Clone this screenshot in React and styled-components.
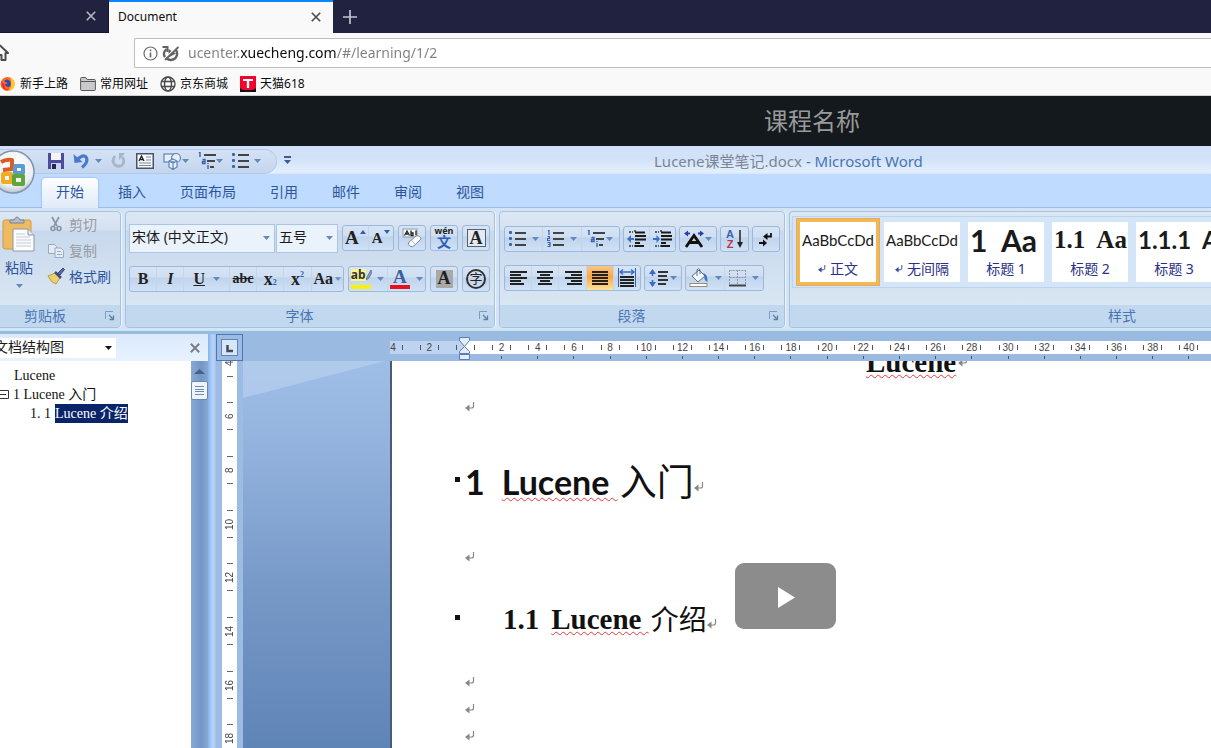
import React from "react";
import styled, { createGlobalStyle, css } from "styled-components";

const GlobalStyle = createGlobalStyle`
  *, *::before, *::after { box-sizing: border-box; }
  html, body { margin: 0; height: 100%; }
  body { overflow: hidden; background: #fff; }
  #root { height: 100%; }
  button, select, input { font: inherit; color: inherit; margin: 0; padding: 0; border: 0; background: none; }
  button { cursor: pointer; }
  h1, h2, p, ul { margin: 0; padding: 0; font-weight: inherit; }
  svg { display: block; flex: none; }
`;

const ui = `"Noto Sans", "Noto Sans CJK SC", sans-serif`;
const serif = `"Liberation Serif", "Noto Sans CJK SC", serif`;

const Screen = styled.div`
  display: flex;
  flex-direction: column;
  height: 100vh;
  overflow: hidden;
  font-family: ${ui};
`;

/* ---------- browser chrome ---------- */

const TabStrip = styled.div`
  display: flex;
  flex: none;
  height: 33px;
  background: #20223f;
`;

const BrowserTab = styled.div`
  display: flex;
  align-items: center;
  justify-content: space-between;
  flex: none;
  width: ${(p) => (p.$active ? 224 : 109)}px;
  padding: 0 11px 2px 9px;
  font-size: 12px;
  color: #0c0c0d;
  ${(p) =>
    p.$active
      ? css`
          background: #f9f9fa;
          border-top: 2px solid #0a84ff;
        `
      : css`
          padding-top: 2px;
          border-right: 1px solid #14162c;
          border-bottom: 1px solid #14162c;
        `}
`;

const ChromeButton = styled.button`
  display: flex;
  align-items: center;
  justify-content: center;
  width: ${(p) => p.$w || 12}px;
`;

const NavBar = styled.div`
  display: flex;
  align-items: center;
  flex: none;
  height: 39px;
  padding-top: 1px;
  background: #f9f9fa;
`;

const HomeButton = styled.button`
  width: 134px;
  margin-left: -9px;
  margin-right: 9px;
  flex: none;
`;

const AddressBox = styled.label`
  display: flex;
  align-items: center;
  flex: 1;
  gap: 4px;
  height: 30px;
  padding-left: 8px;
  background: #fff;
  border: 1px solid #bdbdbf;
  border-right: 0;
  border-radius: 2px 0 0 2px;
`;

const AddressInput = styled.input`
  flex: 1;
  min-width: 0;
  height: 28px;
  margin-left: 5px;
  padding-bottom: 2px;
  font-family: "Noto Sans", sans-serif;
  font-size: 14px;
  color: transparent;
  background: linear-gradient(to right, #7f7f80 53px, #0c0c0d 53px, #0c0c0d 149px, #7f7f80 149px);
  -webkit-background-clip: text;
  background-clip: text;
  outline: none;
`;

const BookmarkBar = styled.nav`
  display: flex;
  align-items: center;
  gap: 12px;
  flex: none;
  height: 24px;
  background: #f9f9fa;
  border-bottom: 1px solid #d0d0d2;
`;

const Bookmark = styled.a`
  display: flex;
  align-items: center;
  gap: 4px;
  font-size: 12px;
  line-height: 16px;
  white-space: nowrap;
  color: #0c0c0d;
  text-decoration: none;
`;

const CourseHeader = styled.header`
  flex: none;
  height: 50px;
  padding-left: 764px;
  background: #14191d;
  color: #999;
  font-size: 24px;
  line-height: 50px;
  white-space: nowrap;
`;

/* ---------- word window ---------- */

const Word = styled.main`
  position: relative;
  display: flex;
  flex-direction: column;
  flex: 1;
  min-height: 0;
  overflow: hidden;
  background: #9bbae2;
  color: #2c559b;
  font-size: 14px;
`;

const TitleBar = styled.div`
  display: flex;
  align-items: center;
  flex: none;
  height: 28px;
  padding-top: 3px;
  background: linear-gradient(#cfdffb 0, #d3e2f8 6px, #d0e1f8 12px, #e4effd 26px, #d5e5fb 28px);
`;

const QuickAccess = styled.div`
  display: flex;
  align-items: center;
  gap: 9px;
  height: 25px;
  padding: 0 15px 2px 48px;
  background: linear-gradient(#d5e2f4, #c3d6ee);
  border: 1px solid #b4cae6;
  border-left: 0;
  border-radius: 0 13px 13px 0;
`;

const QuickButton = styled.button`
  display: flex;
  align-items: center;
  justify-content: space-between;
  width: ${(p) => p.$w}px;
`;

const OverflowButton = styled.button`
  margin-left: 7px;
  padding-bottom: 4px;
`;

const WindowTitle = styled.div`
  margin-left: 363px;
  padding-bottom: 2px;
  white-space: nowrap;
  font-size: 15px;
  color: #4a75b3;
`;

const FileName = styled.span`
  color: #7c8593;
`;

const OfficeButton = styled.button`
  position: absolute;
  left: -9px;
  top: 4px;
`;

const RibbonTabs = styled.div`
  display: flex;
  align-items: stretch;
  flex: none;
  height: 34px;
  padding: 4px 0 0 39px;
  background: #bfdbff;
  border-bottom: 1px solid #9dbde6;
`;

const RibbonTab = styled.button`
  flex: none;
  margin: 0 3px -1px;
  padding: 0 14px 2px;
  line-height: 28px;
  white-space: nowrap;
  ${(p) =>
    p.$active &&
    css`
      background: linear-gradient(#fdfeff, #dfeaf8);
      border-radius: 4px 4px 0 0;
      box-shadow: 0 0 2px #6f9bd2;
    `}
`;

const Ribbon = styled.div`
  display: flex;
  gap: 4px;
  flex: none;
  height: 123px;
  padding: 3px 0 2px;
  background: #d5e4f5;
  border-bottom: 1px solid #b9eef0;
  overflow: hidden;
`;

const Group = styled.section`
  display: flex;
  flex-direction: column;
  flex: ${(p) => (p.$w ? "none" : "1")};
  width: ${(p) => (p.$w ? `${p.$w}px` : "auto")};
  margin-left: ${(p) => (p.$cut ? -10 : 0)}px;
  min-width: 0;
  border: 1px solid #a6c2e2;
  border-right-width: ${(p) => (p.$w ? 1 : 0)}px;
  border-radius: ${(p) => (p.$w ? "4px" : "4px 0 0 4px")};
  box-shadow: 1px 0 0 #eef5fd;
  background: linear-gradient(#dde7f4 0, #d5e1f0 18px, #c8d9ed 19px, #d9e6f3 95px);
  overflow: hidden;
`;

const GroupBody = styled.div`
  display: flex;
  flex-direction: ${(p) => (p.$row ? "row" : "column")};
  flex: 1;
  gap: ${(p) => p.$gap || 0}px;
  padding: ${(p) => p.$pad};
  min-width: 0;
`;

const GroupFooter = styled.div`
  display: flex;
  align-items: center;
  flex: none;
  height: 22px;
  padding-right: 5px;
  background: #c1d8ef;
  color: #4a75b3;
`;

const GroupLabel = styled.span`
  flex: 1;
  padding-left: ${(p) => p.$shift || 0}px;
  padding-right: ${(p) => (p.$shift ? 0 : 6)}px;
  text-align: center;
  line-height: 20px;
`;

const PasteButton = styled.button`
  display: flex;
  flex-direction: column;
  align-items: center;
  gap: 6px;
  width: 40px;
  line-height: 20px;
`;

const ClipList = styled.div`
  display: flex;
  flex-direction: column;
  gap: 2px;
  margin-top: -4px;
`;

const ClipButton = styled.button`
  display: flex;
  align-items: center;
  gap: 4px;
  height: 24px;
  color: ${(p) => (p.disabled ? "#979ba3" : "#2c559b")};
`;

const ClipIcon = styled.span`
  display: flex;
  justify-content: center;
  width: 18px;
`;

const ToolRow = styled.div`
  display: flex;
  align-items: center;
  gap: ${(p) => p.$gap}px;
  height: 28px;
`;

const Combos = styled.div`
  display: flex;
  gap: 1px;
  height: 29px;
`;

const ComboBox = styled.label`
  display: flex;
  align-items: center;
  width: ${(p) => p.$w}px;
  padding-right: 4px;
  background: #eaf2fb;
  border: 1px solid #abc5e5;
`;

const Select = styled.select`
  appearance: none;
  flex: 1;
  min-width: 0;
  padding-left: 2px;
  padding-bottom: 2px;
  color: #1b1b1b;
  outline: none;
  line-height: 20px;
`;

const Cluster = styled.div`
  display: flex;
  flex: none;
  width: ${(p) => p.$w}px;
  height: 26px;
  border: 1px solid #9db8dd;
  border-radius: 3px;
  background: linear-gradient(#d6e4f5 0, #cfdef1 10px, #bfd3ec 11px, #d0e2f6 24px);
  overflow: hidden;
`;

const Tool = styled.button`
  display: flex;
  align-items: center;
  justify-content: center;
  gap: ${(p) => p.$gap || 0}px;
  flex: ${(p) => p.$grow || 1};
  min-width: 0;
  border-left: 1px solid #c4d6ec;
  color: #222;
  white-space: nowrap;
  &:first-child { border-left: 0; }
  ${(p) =>
    p.$on &&
    css`
      background: linear-gradient(#f8c58a, #fba63f 45%, #fde49a);
    `}
`;

const Glyph = styled.span`
  font-family: "Liberation Serif", serif;
  font-size: ${(p) => p.$size || 18}px;
  line-height: 20px;
  font-weight: 700;
  font-style: ${(p) => (p.$italic ? "italic" : "normal")};
  text-decoration: ${(p) => p.$line || "none"};
  color: ${(p) => p.$color || "#222"};
`;

const Script = styled.sup`
  align-self: ${(p) => (p.$low ? "flex-end" : "flex-start")};
  padding: 4px 0;
  font: 700 8px/8px "Liberation Serif", serif;
  color: #2f5fb5;
`;

const SizeArrow = styled.svg`
  align-self: flex-start;
  margin-top: 4px;
`;

const Framed = styled.span`
  width: ${(p) => (p.$fill ? 17 : 19)}px;
  height: 18px;
  text-align: center;
  font: 700 18px/17px "Liberation Serif", serif;
  color: #222;
  background: ${(p) => (p.$fill ? "#a9a9a9" : "#e3eaf4")};
  border: ${(p) => (p.$fill ? "0" : "1px solid #5a6069")};
`;

const Circled = styled.span`
  width: 20px;
  height: 20px;
  border: 2px solid #333;
  border-radius: 50%;
  text-align: center;
  font-size: 13px;
  line-height: 15px;
`;

const Pinyin = styled.span`
  display: flex;
  flex-direction: column;
  align-items: center;
  font-weight: 700;
`;
const PinyinTop = styled.span`
  font-size: 9px;
  line-height: 8px;
`;
const PinyinBase = styled.span`
  font-size: 14px;
  line-height: 14px;
  color: #2f5fb5;
`;

const ColorTool = styled.span`
  display: flex;
  align-items: flex-start;
  justify-content: center;
  width: 20px;
  height: 20px;
  border-bottom: 4px solid ${(p) => p.$bar};
`;

const Letter = styled.span`
  font-family: ${(p) => (p.$sans ? ui : `"Liberation Serif", serif`)};
  font-size: ${(p) => (p.$sans ? 12 : 19)}px;
  line-height: ${(p) => (p.$sans ? 12 : 16)}px;
  font-weight: 700;
  color: ${(p) => p.$color || "#333"};
  background: ${(p) => p.$bg || "none"};
`;

const SortLetters = styled.span`
  display: flex;
  flex-direction: column;
  font: 700 11px/10px "Liberation Sans", sans-serif;
  color: #3763b4;
`;
const SortZ = styled.span`
  color: #b23a4b;
`;

const Gallery = styled.div`
  display: flex;
  gap: 8px;
  flex: 1;
  height: 72px;
  padding: 5px 0 5px 7px;
  background: #d5e5f8;
  border: 1px solid #bdd2ec;
  border-right: 0;
  overflow: hidden;
`;

const StyleCard = styled.button`
  display: flex;
  flex-direction: column;
  align-items: center;
  justify-content: space-between;
  flex: none;
  width: 76px;
  padding: 0 2px 3px;
  background: #fff;
  overflow: hidden;
  ${(p) =>
    p.$on &&
    css`
      outline: 3px solid #f3b850;
      box-shadow: 0 0 0 4px #dfab66;
    `}
`;

const Sample = styled.span`
  height: 36px;
  line-height: 36px;
  white-space: pre;
  color: #1a1a1a;
  align-self: ${(p) => (p.$bold ? "flex-start" : "center")};
  font-family: ${(p) => p.$font};
  font-size: ${(p) => p.$size}px;
  font-weight: ${(p) => (p.$bold ? 700 : 400)};
`;

const StyleName = styled.span`
  display: flex;
  align-items: center;
  gap: 4px;
  line-height: 20px;
  color: #2c2f86;
`;

/* ---------- work area ---------- */

const WorkArea = styled.div`
  display: flex;
  flex: 1;
  min-height: 0;
  padding-top: 3px;
`;

const MapPane = styled.aside`
  display: flex;
  flex-direction: column;
  flex: none;
  width: 208px;
  background: #fff;
  color: #111;
`;

const PaneHead = styled.div`
  display: flex;
  align-items: center;
  justify-content: space-between;
  flex: none;
  height: 27px;
  padding-right: 7px;
  background: linear-gradient(#dbe9fc, #e8f2ff);
`;

const PaneSelect = styled.label`
  display: flex;
  align-items: center;
  width: 124px;
  height: 20px;
  margin-left: -8px;
  padding-right: 4px;
  background: #fff;
`;

const PaneBody = styled.div`
  display: flex;
  flex: 1;
  min-height: 0;
`;

const Tree = styled.ul`
  flex: 1;
  padding-top: 5px;
  list-style: none;
  font-family: ${serif};
  font-size: 14px;
  line-height: 19px;
`;

const TreeItem = styled.li`
  display: flex;
  align-items: center;
  gap: 4px;
  height: 19px;
  padding-left: ${(p) => p.$indent}px;
  white-space: pre;
`;

const Chosen = styled.span`
  background: #0a246a;
  color: #fff;
`;

const ScrollTrack = styled.div`
  display: flex;
  flex-direction: column;
  align-items: center;
  gap: 7px;
  flex: none;
  width: 17px;
  padding-top: 8px;
  background: linear-gradient(to right, #88a9d4, #7297c6 60%, #86a8d4);
`;

const ScrollThumb = styled.div`
  display: flex;
  flex-direction: column;
  justify-content: space-evenly;
  align-self: stretch;
  height: 19px;
  padding: 2px 3px;
  background: #eef4fb;
  border: 1px solid #6d88ad;
  border-radius: 2px;
`;
const Grip = styled.span`
  height: 1px;
  background: #7389a8;
`;

const Splitter = styled.div`
  flex: none;
  width: 8px;
  background: linear-gradient(to right, #86b2ee, #b9d4fa 60%, #a6c1e4);
`;

const RulerColumn = styled.div`
  display: flex;
  flex-direction: column;
  flex: none;
  width: 27px;
  background: #9dbce4;
`;

const TabCorner = styled.button`
  display: flex;
  align-items: center;
  justify-content: center;
  flex: none;
  height: 27px;
  border: 1px solid #4d76b8;
`;

const VerticalRuler = styled.div`
  display: flex;
  flex: 1;
  min-height: 0;
  width: 15px;
  margin-left: 6px;
  background: #fff;
  overflow: hidden;
`;

const VerticalMarks = styled.div`
  display: grid;
  grid-template-rows: repeat(8, 1fr);
  flex: 1;
  margin: -25px 0 -17px;
`;

const VerticalMark = styled.div`
  display: flex;
  flex-direction: column;
  align-items: center;
  justify-content: center;
  font: 10px/13px "Liberation Sans", sans-serif;
  color: #444;
`;
const Turned = styled.span`
  display: flex;
  align-items: center;
  justify-content: center;
  height: 26px;
  writing-mode: vertical-rl;
  transform: rotate(180deg);
`;
const Dash = styled.span`
  width: 6px;
  height: 1px;
  background: #666;
`;

const Canvas = styled.div`
  display: flex;
  flex-direction: column;
  flex: 1;
  min-width: 0;
`;

const RulerRow = styled.div`
  position: relative;
  flex: none;
  height: 27px;
  padding: 7px 0 0 147px;
  background: #9bbae2;
`;

const RulerBand = styled.div`
  height: 13px;
  background: linear-gradient(to right, #bdd3f1 75px, #fff 75px);
  overflow: hidden;
`;

const Marks = styled.div`
  display: grid;
  grid-template-columns: repeat(23, 1fr);
  margin: 0 4px 0 -15px;
`;

const Mark = styled.div`
  display: flex;
  align-items: center;
  justify-content: center;
  height: 13px;
  font: 10px/13px "Liberation Sans", sans-serif;
  color: #444;
`;
const MarkNumber = styled.span`
  width: 17px;
  text-align: center;
`;
const Pin = styled.span`
  width: 1px;
  height: 5px;
  background: #555;
`;
const TickCell = styled.div`
  display: flex;
  justify-content: center;
  height: 5px;
  padding-top: 2px;
`;
const TickRow = styled.div`
  overflow: hidden;
`;
const IndentMarker = styled.svg`
  position: absolute;
  left: 215px;
  top: 3px;
`;

const Sheet = styled.div`
  display: flex;
  flex: 1;
  min-height: 0;
`;

const Desk = styled.div`
  flex: none;
  width: 147px;
  background: linear-gradient(#9fbee7, #92b1dc 24%, #7698c7 60%, #5f84b6);
`;

const Page = styled.article`
  flex: 1;
  min-width: 0;
  padding-left: 63px;
  background: #fff;
  border-left: 2px solid #4b5b73;
  color: #111;
  overflow: hidden;
`;

const PageTitle = styled.h1`
  display: flex;
  align-items: center;
  gap: 2px;
  height: 48px;
  margin: -16px 0 0 411px;
  padding-bottom: 14px;
  font: 700 29px/34px ${serif};
`;

const EmptyLine = styled.p`
  display: flex;
  align-items: center;
  height: 27px;
  padding-left: 10px;
`;

const Heading = styled.h2`
  display: flex;
  align-items: center;
  gap: ${(p) => p.$gap}px;
  height: ${(p) => p.$h}px;
  font-family: ${(p) => p.$font};
  font-size: ${(p) => p.$size}px;
  font-weight: 700;
  white-space: pre;
`;

const Bullet = styled.span`
  width: 5px;
  height: 5px;
  margin-right: ${(p) => p.$mr}px;
  margin-bottom: 4px;
  background: #111;
`;

const HeadNumber = styled.span`
  margin-right: ${(p) => p.$mr}px;
`;

const Spelled = styled.span`
  text-decoration: underline wavy #e8383c 1px;
  text-decoration-skip-ink: none;
  text-underline-offset: 2px;
`;

const Han = styled.span`
  margin-left: ${(p) => p.$ml || 0}px;
  font-family: "Noto Sans CJK SC", sans-serif;
  font-size: ${(p) => p.$size}px;
  line-height: 40px;
  padding-bottom: 3px;
  font-weight: 400;
`;

const EndMark = styled.span`
  padding-top: 10px;
`;

const PlayButton = styled.button`
  position: absolute;
  left: 735px;
  top: 417px;
  display: flex;
  align-items: center;
  justify-content: center;
  width: 101px;
  height: 66px;
  padding: 2px 0 0 2px;
  border-radius: 9px;
  background: #8c8c8c;
`;

/* ---------- drawings ---------- */

const Caret = ({ c = "#6389bd", w = 7 }) => (
  <svg width={w} height="4" viewBox="0 0 7 4"><path d="M0 0h7L3.500 4z" fill={c} /></svg>
);

const Cross = ({ c, size = 10, w = 1.6 }) => (
  <svg width={size} height={size} viewBox="0 0 10 10"><path d="M.8.8l8.400 8.400M9.200.8L.8 9.200" stroke={c} strokeWidth={w} fill="none" /></svg>
);

const Return = ({ c = "#888", w = 10 }) => (
  <svg width={w} height={w} viewBox="0 0 10 10">
    <path d="M8.500 0v4q0 2-2 2H3" stroke={c} strokeWidth="1.200" fill="none" />
    <path d="M0 6L4.500 2.500v7z" fill={c} />
  </svg>
);

const Launcher = () => (
  <svg width="10" height="10" viewBox="0 0 10 10" fill="none" stroke="#7c9cc6">
    <path d="M.5 8V.5H8" /><path d="M4 4l4 4M8.500 4.500v4h-4" stroke="#64829f" strokeWidth="1.300" />
  </svg>
);

const Bars = ({ rows, w = 18 }) => (
  <svg width={w} height="16" viewBox={`0 0 ${w} 16`}>
    {rows.map(([x, len], i) => <rect key={i} x={x} y={1 + i * 3} width={len} height="2" fill="#222" />)}
  </svg>
);

const BulletList = ({ w = 17 }) => (
  <svg width={w} height="16" viewBox="0 0 17 16">
    {[1, 7, 13].map((y) => <g key={y}><rect x="0" y={y - 1} width="3" height="3" rx="1" fill="#3b62b0" /><rect x="6" y={y} width="11" height="2" fill="#444" /></g>)}
  </svg>
);

const NumberList = () => (
  <svg width="17" height="18" viewBox="0 0 17 18">
    {[2, 8, 14].map((y) => <rect key={y} x="6" y={y} width="11" height="2" fill="#444" />)}
    <path d="M1 1l1-1v5M.5 6.500h2v2h-2v2h2.500M.5 12.500h2.500v4h-2.500M1 14.500h2" stroke="#3b62b0" strokeWidth="1.200" fill="none" />
  </svg>
);

const MultiList = ({ w = 18 }) => (
  <svg width={w} height="18" viewBox="0 0 18 18">
    <path d="M1 1l1-1v5M4.500 7.500h2.500v4h-2.500v-2h2M10 13v4M10 11v1" stroke="#3b62b0" strokeWidth="1.400" fill="none" />
    <path d="M6 3h12M9 9h8M12 15h4" stroke="#444" strokeWidth="2" />
  </svg>
);

const Indent = ({ out }) => (
  <svg width="19" height="18" viewBox="0 0 19 18">
    <path d="M2 2h4M2 16h4M8 0v3M8 15v3" stroke="#333" strokeWidth="1.500" strokeDasharray="2 1" />
    <path d="M8 2.500h10M8 6h11M8 9.500h11M8 13h5M8 16h9" stroke="#1a1a1a" strokeWidth="2" />
    <path d={out ? "M0 9l4-4v3h3v2H4v3z" : "M7 9L3.500 5v3H0v2h3.500v3z"} fill="#3d6fc4" />
  </svg>
);

const AsianLayout = () => (
  <svg width="20" height="18" viewBox="0 0 20 18">
    <path d="M2 17L10 5.500 18 17M5.500 12.500h9" stroke="#111" strokeWidth="2.800" fill="none" />
    <path d="M0 3.500l4-3v6zM4 2.500h2v2H4zM20 3.500l-4-3v6zM14 2.500h2v2h-2z" fill="#2b3fae" />
  </svg>
);

const Distribute = () => (
  <svg width="18" height="20" viewBox="0 0 18 20">
    <path d="M.5 0v19M17.500 0v19" stroke="#3a5fa8" />
    <path d="M2 4h14M5 1.500L2 4l3 2.500M13 1.500L16 4l-3 2.500" stroke="#3a6cc6" strokeWidth="1.400" fill="none" />
    <path d="M2 9h14M2 12h14M2 15h14M2 18h14" stroke="#222" strokeWidth="2" />
  </svg>
);

const LineSpacing = () => (
  <svg width="19" height="18" viewBox="0 0 19 18">
    <path d="M3.500 1v6M3.500 11v6" stroke="#3a6cc6" strokeWidth="1.600" />
    <path d="M0 5l3.500-5L7 5zM0 13l3.500 5L7 13z" fill="#3a6cc6" />
    <path d="M9 3h10M9 7h9M9 11h10M9 15h8" stroke="#333" strokeWidth="1.800" />
  </svg>
);

const Bucket = () => (
  <svg width="20" height="20" viewBox="0 0 20 20">
    <path d="M3 8l7-6 6 6-7 6z" fill="#f4f7fb" stroke="#566f93" /><path d="M8 8V2q1.500-3 3 0v4" fill="none" stroke="#566f93" />
    <path d="M14 5q5 1 4.500 9-4-2-3-6" fill="#4375bd" /><rect x="1" y="15.500" width="17" height="3" fill="#fff" stroke="#9a8b74" />
  </svg>
);

const Borders = () => (
  <svg width="17" height="18" viewBox="0 0 17 18" fill="none" stroke="#8c96a5">
    <path d="M.5 1.500h16M.5 8.500h16M.5 1v15M8.500 1v15M16.500 1v15" strokeDasharray="2 1" /><path d="M0 16.500h17" stroke="#444" strokeWidth="2" />
  </svg>
);

const Eraser = () => (
  <svg width="20" height="20" viewBox="0 0 20 20">
    <rect x="1" y="1" width="14" height="8" fill="#f5f7fa" stroke="#8d9bb0" />
    <path d="M2.500 7.500L5 3l2.500 4.500M4 6h2M9 2.500v5h2V5H9M14 2.500v5" stroke="#222" strokeWidth="1.300" fill="none" />
    <path d="M7 14l7-6q4-1 5 3l-6 6q-3 3-5 1-3-1-1-4z" fill="#fff" stroke="#7c8aa3" /><path d="M9 12l4 4" stroke="#a3b0c4" />
  </svg>
);

const Undo = ({ c }) => (
  <svg width="16" height="16" viewBox="0 0 16 16">
    <path d="M5 6q5-5 8-2 3 5-4 10.500" fill="none" stroke={c} strokeWidth="3.200" /><path d="M.5 1l1 9 8-1z" fill={c} />
  </svg>
);

const Redo = () => (
  <svg width="16" height="16" viewBox="0 0 16 16">
    <path d="M4 3Q0 8 4 12q5 3 8-1 2-4-1-7" fill="none" stroke="#a9b5c8" strokeWidth="2.800" /><path d="M8 7V0h6z" fill="#a9b5c8" />
  </svg>
);

const Disk = () => (
  <svg width="16" height="16" viewBox="0 0 16 16">
    <path d="M0 0h16v16H0z" fill="#4b4a9c" /><rect x="3" y="0" width="10" height="7" fill="#f3f5fb" /><rect x="3" y="10" width="10" height="6" fill="#c9d4ea" /><rect x="4" y="11" width="4" height="5" fill="#23265c" />
  </svg>
);

const TextBoxIcon = () => (
  <svg width="18" height="16" viewBox="0 0 18 16">
    <rect x=".75" y=".75" width="16.500" height="14.500" fill="#f8fafd" stroke="#46546b" strokeWidth="1.500" />
    <path d="M3 8l2.500-5L8 8M4 6.500h3" stroke="#222" strokeWidth="1.300" fill="none" /><path d="M10 4h5M10 7h5M3 10h12M3 12.500h12" stroke="#7e8ba0" />
  </svg>
);

const Shapes = () => (
  <svg width="18" height="18" viewBox="0 0 18 18" fill="#e6effb" stroke="#5f83b8" strokeWidth="1.200">
    <rect x="1" y="2" width="10" height="8" /><circle cx="13" cy="6" r="4.500" /><path d="M6 9l4-2 4 2v6l-4 2.500-4-2.500zM6 9l4 2 4-2M10 11v6" />
  </svg>
);

const OfficeLogo = () => (
  <svg width="44" height="44" viewBox="0 0 44 44">
    <defs>
      <radialGradient id="orb" cx=".5" cy=".35" r=".7"><stop offset="0" stopColor="#fff" /><stop offset=".7" stopColor="#eceff4" /><stop offset="1" stopColor="#a5b2c4" /></radialGradient>
    </defs>
    <circle cx="22" cy="22" r="21" fill="url(#orb)" stroke="#8395ae" strokeWidth="1.500" />
    <g fill="none" strokeWidth="4" strokeLinejoin="round">
      <path d="M10 12q5-3 11-2v9l-9 1" stroke="#dd5a20" /><path d="M24 16h8v7h-8z" stroke="#5b9bd5" />
      <path d="M12 24h8v8h-8z" stroke="#f0ad22" /><path d="M23 26h9v8h-9z" stroke="#5fa53a" />
    </g>
  </svg>
);

const PasteIcon = () => (
  <svg width="34" height="36" viewBox="0 0 34 36">
    <rect x="1" y="4" width="28" height="29" rx="2" fill="#eebb60" stroke="#cf9a45" />
    <path d="M8 7V4h4q3-6 6 0h4v3z" fill="#b3bcc8" stroke="#768496" />
    <path d="M11 13h15l6 6v16H11z" fill="#fbfcfe" stroke="#8c97a7" /><path d="M26 13v6h6" fill="#dfe6ef" stroke="#8c97a7" />
    <path d="M14 18h9M14 21h14M14 24h15M14 27h15M14 30h15" stroke="#c5ccd7" />
  </svg>
);

const Scissors = () => (
  <svg width="16" height="16" viewBox="0 0 16 16" fill="none" stroke="#8494ab" strokeWidth="1.600">
    <path d="M4 1l5 9M11 1L6 10" /><circle cx="5" cy="12.500" r="2" /><circle cx="11" cy="12.500" r="2" />
  </svg>
);

const CopyIcon = () => (
  <svg width="16" height="16" viewBox="0 0 16 16" fill="#e4ebf5" stroke="#9aaac1">
    <path d="M.5 2.500h6l2 2v7h-8z" /><path d="M7 6h6l2.500 2.500v7H7z" /><path d="M9 9.500h4M9 12.500h5" />
  </svg>
);

const Brush = () => (
  <svg width="18" height="18" viewBox="0 0 18 18">
    <path d="M11 6l5-5 1.500 1.500-4.500 5.500z" fill="#5c6fa8" stroke="#35457c" /><path d="M1 9l7-3 5 5-4 6q-5-1-8-8z" fill="#edd06e" stroke="#b89c48" /><path d="M8 5l6 6" stroke="#3f4d84" strokeWidth="2.500" />
  </svg>
);

const Home = () => (
  <svg width="18" height="18" viewBox="0 0 18 18">
    <path d="M1 9l8-7.500L17 9h-2.500v7h-4v-5h-3v5h-4V9z" fill="none" stroke="#4a4a4c" strokeWidth="2" strokeLinejoin="round" /><rect x="7" y="11" width="2" height="5" fill="#4a4a4c" />
  </svg>
);

const Info = () => (
  <svg width="15" height="15" viewBox="0 0 15 15">
    <circle cx="7.500" cy="7.500" r="6.500" fill="none" stroke="#6b6b6d" strokeWidth="1.200" /><path d="M7.500 6.500v5M7.500 3.500v1.700" stroke="#6b6b6d" strokeWidth="1.600" />
  </svg>
);

const Blocked = () => (
  <svg width="17" height="17" viewBox="0 0 17 17" fill="none" stroke="#626264">
    <path d="M4.500 4Q-.5 9 4 13q5 4 9.500 0 3-4 .5-8" strokeWidth="2.400" /><path d="M.5 2h5v5" strokeWidth="2" />
    <path d="M6.500 4l7.500 4.500-7.500 4z" fill="#626264" stroke="none" /><path d="M16 1L2 14" stroke="#fff" strokeWidth="1.600" /><path d="M16.500 2L3 15" strokeWidth="1.800" />
  </svg>
);

const Fox = () => (
  <svg width="16" height="16" viewBox="0 0 16 16">
    <circle cx="7.500" cy="8" r="7" fill="#ff6a1f" /><path d="M10 1q6 3 4.500 9-2 5-7 5 6-4 2.500-14z" fill="#ffc928" />
    <path d="M1.500 5q0 10 8 9-6-1-5-5z" fill="#e6253c" /><path d="M4 5q3-3 6 0 2 4-1 6-4 0-4-3l3-.5z" fill="#2a4bb8" />
  </svg>
);

const Folder = () => (
  <svg width="16" height="14" viewBox="0 0 16 14"><path d="M.6 1.500q0-1 1-1h4l1.500 2h7.300q1 0 1 1v9q0 1-1 1H1.600q-1 0-1-1z" fill="#c9c9cb" stroke="#59595b" /><path d="M.6 4.500h14.800" stroke="#59595b" /></svg>
);

const Globe = () => (
  <svg width="16" height="16" viewBox="0 0 16 16" fill="none" stroke="#4a4a4c" strokeWidth="1.400">
    <circle cx="8" cy="8" r="7" /><ellipse cx="8" cy="8" rx="3.500" ry="7" /><path d="M1.500 5.500h13M1.500 10.500h13" />
  </svg>
);

const Tmall = () => (
  <svg width="16" height="16" viewBox="0 0 16 16"><rect width="16" height="16" fill="#f5002d" /><path d="M0 16v-4q2 2 4 2h8q2 0 4-2v4z" fill="#111" /><path d="M3 3h10v2H9.200v7H6.800V5H3z" fill="#fff" /></svg>
);

const alignLeft = [[1, 17], [1, 11], [1, 17], [1, 11], [1, 14]];
const alignCenter = [[1, 16], [4, 10], [1, 16], [4, 10], [2, 14]];
const alignRight = [[1, 17], [7, 11], [1, 17], [7, 11], [3, 15]];
const justify = [[1, 16], [1, 16], [1, 16], [1, 16], [1, 16]];

const styleCards = [
  { sample: "AaBbCcDd", name: "正文", mark: true, on: true, font: '"Lato", sans-serif', size: 15 },
  { sample: "AaBbCcDd", name: "无间隔", mark: true, font: '"Lato", sans-serif', size: 15 },
  { sample: "1  Aa", name: "标题 1", bold: true, font: '"Lato", sans-serif', size: 30 },
  { sample: "1.1  Aa", name: "标题 2", bold: true, font: '"Liberation Serif", serif', size: 25 },
  { sample: "1.1.1  Aa", name: "标题 3", bold: true, font: '"Lato", sans-serif', size: 24 },
];

const rulerNumbers = ["4", "2", "", ...Array.from({ length: 20 }, (_, i) => String((i + 1) * 2))];
const verticalNumbers = [4, 6, 8, 10, 12, 14, 16, 18];
const ribbonTabs = ["开始", "插入", "页面布局", "引用", "邮件", "审阅", "视图"];

function Browser() {
  return (
    <>
      <TabStrip>
        <BrowserTab><span /><ChromeButton aria-label="Close"><Cross c="#b9b9c6" /></ChromeButton></BrowserTab>
        <BrowserTab $active><span>Document</span><ChromeButton aria-label="Close"><Cross c="#4a4a4c" /></ChromeButton></BrowserTab>
        <ChromeButton $w={34} aria-label="New tab">
          <svg width="14" height="14" viewBox="0 0 14 14"><path d="M7 0v14M0 7h14" stroke="#c4c4d0" strokeWidth="1.700" /></svg>
        </ChromeButton>
      </TabStrip>
      <NavBar>
        <HomeButton aria-label="Home"><Home /></HomeButton>
        <AddressBox>
          <Info /><Blocked />
          <AddressInput aria-label="Address" defaultValue="ucenter.xuecheng.com/#/learning/1/2" />
        </AddressBox>
      </NavBar>
      <BookmarkBar>
        <Bookmark href="#start"><Fox />新手上路</Bookmark>
        <Bookmark href="#common"><Folder />常用网址</Bookmark>
        <Bookmark href="#jd"><Globe />京东商城</Bookmark>
        <Bookmark href="#tmall"><Tmall />天猫618</Bookmark>
      </BookmarkBar>
      <CourseHeader>课程名称</CourseHeader>
    </>
  );
}

function FontGroup() {
  return (
    <Group $w={370} aria-label="字体">
      <GroupBody $gap={13} $pad="12px 3px 0">
        <ToolRow $gap={4}>
          <Combos>
            <ComboBox $w={146}><Select aria-label="Font" defaultValue="a"><option value="a">宋体 (中文正文)</option></Select><Caret /></ComboBox>
            <ComboBox $w={62}><Select aria-label="Size" defaultValue="a"><option value="a">五号</option></Select><Caret /></ComboBox>
          </Combos>
          <Cluster $w={52}>
            <Tool $gap={1}><Glyph $size={19}>A</Glyph><SizeArrow width="6" height="4" viewBox="0 0 6 4"><path d="M0 4h6L3 0z" fill="#2f5fb5" /></SizeArrow></Tool>
            <Tool $gap={1}><Glyph $size={15}>A</Glyph><SizeArrow width="6" height="4" viewBox="0 0 6 4"><path d="M0 0h6L3 4z" fill="#2f5fb5" /></SizeArrow></Tool>
          </Cluster>
          <Cluster $w={28}><Tool aria-label="Clear"><Eraser /></Tool></Cluster>
          <Cluster $w={28}><Tool><Pinyin><PinyinTop>wén</PinyinTop><PinyinBase>文</PinyinBase></Pinyin></Tool></Cluster>
          <Cluster $w={28}><Tool><Framed>A</Framed></Tool></Cluster>
        </ToolRow>
        <ToolRow $gap={4}>
          <Cluster $w={215}>
            <Tool><Glyph $size={16}>B</Glyph></Tool>
            <Tool><Glyph $size={16} $italic>I</Glyph></Tool>
            <Tool $grow={1.7} $gap={8}><Glyph $size={16} $line="underline">U</Glyph><Caret /></Tool>
            <Tool><Glyph $size={14} $line="line-through">abc</Glyph></Tool>
            <Tool><Glyph $size={18}>x</Glyph><Script as="sub" $low>2</Script></Tool>
            <Tool><Glyph $size={18}>x</Glyph><Script>2</Script></Tool>
            <Tool $grow={1.2} $gap={2}><Glyph $size={16}>Aa</Glyph><Caret w={6} /></Tool>
          </Cluster>
          <Cluster $w={78}>
            <Tool $gap={6}>
              <ColorTool $bar="#fbf200"><Letter $sans $bg="#f7f58a">ab</Letter><svg width="6" height="12" viewBox="0 0 6 12"><path d="M5 1L1 8l-1 3 3-2 3-6z" fill="#8aa0c2" stroke="#4a5f85" strokeWidth=".7" /></svg></ColorTool>
              <Caret />
            </Tool>
            <Tool $gap={6}><ColorTool $bar="#e8101c"><Letter $color="#3e60a0">A</Letter></ColorTool><Caret /></Tool>
          </Cluster>
          <Cluster $w={28}><Tool><Framed $fill>A</Framed></Tool></Cluster>
          <Cluster $w={28}><Tool><Circled>字</Circled></Tool></Cluster>
        </ToolRow>
      </GroupBody>
      <GroupFooter><GroupLabel>字体</GroupLabel><Launcher /></GroupFooter>
    </Group>
  );
}

function ParagraphGroup() {
  return (
    <Group $w={286} aria-label="段落">
      <GroupBody $gap={11} $pad="13px 4px 0">
        <ToolRow $gap={3}>
          <Cluster $w={116}>
            <Tool $gap={6} aria-label="Bullets"><BulletList /><Caret /></Tool>
            <Tool $gap={6} aria-label="Numbering"><NumberList /><Caret /></Tool>
            <Tool $gap={1} aria-label="Multilevel"><MultiList /><Caret /></Tool>
          </Cluster>
          <Cluster $w={53}><Tool aria-label="Decrease indent"><Indent out /></Tool><Tool aria-label="Increase indent"><Indent /></Tool></Cluster>
          <Cluster $w={38}><Tool $gap={1} aria-label="Asian layout"><AsianLayout /><Caret /></Tool></Cluster>
          <Cluster $w={29}>
            <Tool $gap={3}>
              <SortLetters><span>A</span><SortZ>Z</SortZ></SortLetters>
              <svg width="6" height="18" viewBox="0 0 6 18"><path d="M3 0v14" stroke="#222" strokeWidth="1.500" /><path d="M0 12h6l-3 6z" fill="#222" /></svg>
            </Tool>
          </Cluster>
          <Cluster $w={28}>
            <Tool aria-label="Show marks">
              <svg width="14" height="16" viewBox="0 0 14 16"><path d="M12 2v3.500H8M0 12h5" stroke="#111" strokeWidth="1.800" fill="none" /><path d="M4 5.500L8.500 2v7zM8 12L4 8.500v7z" fill="#111" /></svg>
            </Tool>
          </Cluster>
        </ToolRow>
        <ToolRow $gap={3}>
          <Cluster $w={137}>
            <Tool aria-label="Align left"><Bars rows={alignLeft} /></Tool>
            <Tool aria-label="Center"><Bars rows={alignCenter} /></Tool>
            <Tool aria-label="Align right"><Bars rows={alignRight} /></Tool>
            <Tool $on aria-label="Justify"><Bars rows={justify} /></Tool>
            <Tool aria-label="Distribute"><Distribute /></Tool>
          </Cluster>
          <Cluster $w={38}><Tool $gap={2} aria-label="Line spacing"><LineSpacing /><Caret /></Tool></Cluster>
          <Cluster $w={79}>
            <Tool $gap={6} aria-label="Shading"><Bucket /><Caret /></Tool>
            <Tool $gap={6} aria-label="Borders"><Borders /><Caret /></Tool>
          </Cluster>
        </ToolRow>
      </GroupBody>
      <GroupFooter><GroupLabel>段落</GroupLabel><Launcher /></GroupFooter>
    </Group>
  );
}

export default function App() {
  return (
    <Screen>
      <GlobalStyle />
      <Browser />
      <Word>
        <TitleBar>
          <QuickAccess>
            <QuickButton $w={16} aria-label="Save"><Disk /></QuickButton>
            <QuickButton $w={29} aria-label="Undo"><Undo c="#4a7ad0" /><Caret /></QuickButton>
            <QuickButton $w={16} aria-label="Redo"><Redo /></QuickButton>
            <QuickButton $w={18} aria-label="Text box"><TextBoxIcon /></QuickButton>
            <QuickButton $w={26} aria-label="Shapes"><Shapes /><Caret /></QuickButton>
            <QuickButton $w={25} aria-label="Multilevel list"><MultiList /><Caret /></QuickButton>
            <QuickButton $w={29} aria-label="Bullets"><BulletList /><Caret /></QuickButton>
          </QuickAccess>
          <OverflowButton aria-label="Customize">
            <svg width="7" height="8" viewBox="0 0 7 8"><path d="M0 0h7v2H0zM0 4h7L3.500 8z" fill="#3a5c94" /></svg>
          </OverflowButton>
          <WindowTitle><FileName>Lucene课堂笔记.docx</FileName> - Microsoft Word</WindowTitle>
        </TitleBar>
        <RibbonTabs>
          {ribbonTabs.map((t, i) => <RibbonTab key={t} $active={i === 0}>{t}</RibbonTab>)}
        </RibbonTabs>
        <OfficeButton aria-label="Office"><OfficeLogo /></OfficeButton>
        <Ribbon>
          <Group $w={131} $cut aria-label="剪贴板">
            <GroupBody $row $gap={8} $pad="4px 0 0 8px">
              <PasteButton><PasteIcon /><span>粘贴</span><Caret /></PasteButton>
              <ClipList>
                <ClipButton disabled><ClipIcon><Scissors /></ClipIcon>剪切</ClipButton>
                <ClipButton disabled><ClipIcon><CopyIcon /></ClipIcon>复制</ClipButton>
                <ClipButton><ClipIcon><Brush /></ClipIcon>格式刷</ClipButton>
              </ClipList>
            </GroupBody>
            <GroupFooter><GroupLabel>剪贴板</GroupLabel><Launcher /></GroupFooter>
          </Group>
          <FontGroup />
          <ParagraphGroup />
          <Group aria-label="样式">
            <GroupBody $row $pad="4px 0 0 2px">
              <Gallery>
                {styleCards.map((s) => (
                  <StyleCard key={s.name} $on={s.on}>
                    <Sample $font={s.font} $size={s.size} $bold={s.bold}>{s.sample}</Sample>
                    <StyleName>{s.mark && <Return c="#3a4aa0" w={8} />}{s.name}</StyleName>
                  </StyleCard>
                ))}
              </Gallery>
            </GroupBody>
            <GroupFooter><GroupLabel $shift={248}>样式</GroupLabel></GroupFooter>
          </Group>
        </Ribbon>
        <WorkArea>
          <MapPane>
            <PaneHead>
              <PaneSelect><Select aria-label="Pane" defaultValue="a"><option value="a">文档结构图</option></Select><Caret c="#111" /></PaneSelect>
              <ChromeButton aria-label="Close pane"><Cross c="#7a7f87" w={2} /></ChromeButton>
            </PaneHead>
            <PaneBody>
              <Tree>
                <TreeItem $indent={14}>Lucene</TreeItem>
                <TreeItem $indent={0}>
                  <svg width="9" height="9" viewBox="0 0 9 9"><path d="M0 .5h8.500v8H0M0 4.500h6" stroke="#333" fill="none" /></svg>
                  <span>1 Lucene 入门</span>
                </TreeItem>
                <TreeItem $indent={30}><span>1. 1</span><Chosen>Lucene 介绍</Chosen></TreeItem>
              </Tree>
              <ScrollTrack>
                <svg width="11" height="5" viewBox="0 0 11 5"><path d="M0 5h11L5.500 0z" fill="#4c5f80" /></svg>
                <ScrollThumb><Grip /><Grip /><Grip /><Grip /></ScrollThumb>
              </ScrollTrack>
            </PaneBody>
          </MapPane>
          <Splitter />
          <RulerColumn>
            <TabCorner aria-label="Tab stop">
              <svg width="17" height="17" viewBox="0 0 17 17"><rect x=".5" y=".5" width="16" height="16" fill="#d9e6f7" stroke="#5f83bd" /><path d="M6.500 6v6H12" stroke="#444c5c" strokeWidth="2.500" fill="none" /></svg>
            </TabCorner>
            <VerticalRuler>
              <VerticalMarks>
                {verticalNumbers.map((n) => <VerticalMark key={n}><Dash /><Turned>{n}</Turned><Dash /></VerticalMark>)}
              </VerticalMarks>
            </VerticalRuler>
          </RulerColumn>
          <Canvas>
            <RulerRow>
              <RulerBand>
                <Marks>{rulerNumbers.map((n, i) => <Mark key={i}><Pin /><MarkNumber>{n}</MarkNumber><Pin /></Mark>)}</Marks>
              </RulerBand>
              <TickRow>
                <Marks>{rulerNumbers.map((n, i) => <TickCell key={i}>{i > 2 && <Pin />}</TickCell>)}</Marks>
              </TickRow>
              <IndentMarker width="13" height="24" viewBox="0 0 13 24" fill="#e3edfa" stroke="#5a7db5">
                <path d="M1.500.5h10v3l-5 6-5-6zM6.500 9.500l5 5v2h-10v-2zM1.500 17.500h10v5h-10z" />
              </IndentMarker>
            </RulerRow>
            <Sheet>
              <Desk>
                <svg width="147" height="38" viewBox="0 0 147 38"><path d="M0 0h142L0 37z" fill="#bcd2f0" opacity=".6" /></svg>
              </Desk>
              <Page>
                <PageTitle><Spelled>Lucene</Spelled><Return /></PageTitle>
                <EmptyLine><Return /></EmptyLine>
                <Heading $h={123} $size={34} $font={`"Lato", sans-serif`}>
                  <Bullet $mr={5} /><HeadNumber $mr={17}>1</HeadNumber><Spelled>Lucene </Spelled><Han $ml={2} $size={37}>入门</Han><EndMark><Return /></EndMark>
                </Heading>
                <EmptyLine><Return /></EmptyLine>
                <Heading $h={98} $size={29} $font={serif}>
                  <Bullet $mr={43} /><HeadNumber $mr={12}>1.1</HeadNumber><Spelled>Lucene </Spelled><Han $ml={2} $size={28}>介绍</Han><EndMark><Return /></EndMark>
                </Heading>
                <EmptyLine><Return /></EmptyLine>
                <EmptyLine><Return /></EmptyLine>
                <EmptyLine><Return /></EmptyLine>
              </Page>
            </Sheet>
          </Canvas>
        </WorkArea>
        <PlayButton aria-label="Play">
          <svg width="17" height="21" viewBox="0 0 17 21"><path d="M0 0l17 10.500L0 21z" fill="#fff" /></svg>
        </PlayButton>
      </Word>
    </Screen>
  );
}
